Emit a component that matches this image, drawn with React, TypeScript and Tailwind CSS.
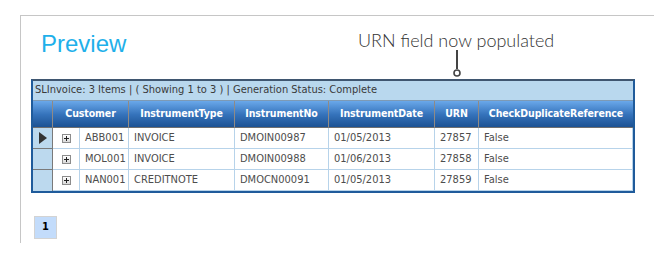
import React from "react";

// ── Data ───────────────────────────────────────────────────────────────────
interface Row {
  customer: string;
  type: string;
  no: string;
  date: string;
  urn: string;
  dup: string;
}

const ROWS: Row[] = [
  { customer: "ABB001", type: "INVOICE", no: "DMOIN00987", date: "01/05/2013", urn: "27857", dup: "False" },
  { customer: "MOL001", type: "INVOICE", no: "DMOIN00988", date: "01/06/2013", urn: "27858", dup: "False" },
  { customer: "NAN001", type: "CREDITNOTE", no: "DMOCN00091", date: "01/05/2013", urn: "27859", dup: "False" },
];

const GRID = "grid grid-cols-[20px_27px_49px_106px_94px_106px_44px_154px]";
const FONT = "font-['DejaVu_Sans_Condensed','DejaVu_Sans',sans-serif]";

function ExpandIcon() {
  return (
    <span className="relative block w-[9px] h-[9px] border border-[#8c8c8c] bg-gradient-to-b from-white to-[#d9d9d9]">
      <span className="absolute left-[1px] top-[3px] w-[5px] h-px bg-[#222]" />
      <span className="absolute left-[3px] top-[1px] w-px h-[5px] bg-[#222]" />
    </span>
  );
}

function HeadCell({ children, className = "" }: { children?: React.ReactNode; className?: string }) {
  return (
    <div
      className={`flex items-center justify-center h-[27px] border-r border-b border-r-[#8f8a86] border-b-[#6f6f6f] text-white font-bold text-[10.5px] tracking-[-0.1px] ${className}`}
    >
      {children}
    </div>
  );
}

function Cell({ children }: { children: React.ReactNode }) {
  return (
    <div className="flex items-center h-[21px] pl-[5px] border-r border-b border-[#b7d3ea] text-[11px] text-[#4d4d4d] whitespace-nowrap">
      {children}
    </div>
  );
}

export default function App() {
  return (
    <div className="w-[664px] h-[255px] bg-white pt-[15px] pl-[20px] overflow-hidden">
      <div className="relative w-[634px] h-[228px] border-t border-l border-[#c6c6c6]">
        {/* Title */}
        <div className="pl-[20px] pt-[14px] h-[63px] text-[24px] leading-[28px] text-[#1fb0ea] font-['Liberation_Sans',Arial,sans-serif]">
          Preview
        </div>

        {/* Annotation callout */}
        <div className="absolute left-[337px] top-[12px] text-[18px] leading-[24px] text-[#333] font-light font-['Lato',sans-serif] whitespace-nowrap">
          URN field now populated
        </div>
        <svg className="absolute left-[429px] top-[34px]" width="14" height="30" viewBox="0 0 14 30">
          <line x1="7" y1="0" x2="7" y2="19" stroke="#444" strokeWidth="2" />
          <circle cx="7" cy="23" r="3" fill="white" stroke="#444" strokeWidth="1.6" />
        </svg>

        {/* Grid */}
        <div className={`ml-[10px] w-[604px] border-2 border-[#1f5b9b] border-t-[#3f5670] ${FONT}`}>
          <div className="h-[20px] flex items-center pl-[2px] bg-[#b9d8ee] text-[11px] text-[#3a3a3a] border-b border-[#7d9ab5]">
            SLInvoice: 3 Items | ( Showing 1 to 3 ) | Generation Status: Complete
          </div>
          <div className={`${GRID} bg-gradient-to-b from-[#6aa8ea] via-[#3573bb] to-[#1a4f90]`}>
            <HeadCell />
            <HeadCell className="col-span-2">Customer</HeadCell>
            <HeadCell>InstrumentType</HeadCell>
            <HeadCell>InstrumentNo</HeadCell>
            <HeadCell>InstrumentDate</HeadCell>
            <HeadCell>URN</HeadCell>
            <HeadCell className="border-r-0">CheckDuplicateReference</HeadCell>
          </div>
          {ROWS.map((r, i) => (
            <div key={r.customer} className={GRID}>
              <div
                className={`flex items-center justify-center h-[21px] bg-[#bcd9ee] border-r border-[#7a7a7a] ${
                  i < ROWS.length - 1 ? "border-b" : ""
                }`}
              >
                {i === 0 && (
                  <svg width="8" height="12" viewBox="0 0 8 12">
                    <polygon points="0,0 8,6 0,12" fill="#333" />
                  </svg>
                )}
              </div>
              <div className="flex items-center justify-center h-[21px] border-r border-b border-[#b7d3ea]">
                <ExpandIcon />
              </div>
              <Cell>{r.customer}</Cell>
              <Cell>{r.type}</Cell>
              <Cell>{r.no}</Cell>
              <Cell>{r.date}</Cell>
              <Cell>{r.urn}</Cell>
              <Cell>{r.dup}</Cell>
            </div>
          ))}
        </div>

        {/* Pager */}
        <div className={`mt-[23px] ml-[13px] w-[23px] h-[23px] flex items-center justify-center bg-[#c3dcfb] border border-[#d3d3d3] text-[11px] font-bold text-black ${FONT}`}>
          1
        </div>
      </div>
    </div>
  );
}
